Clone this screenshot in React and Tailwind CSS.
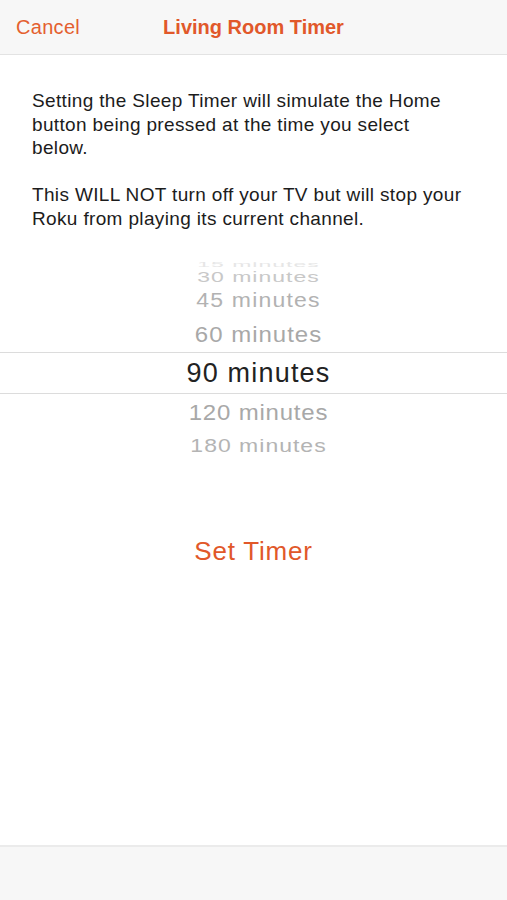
const options = [
  { label: '15 minutes', h: 'h-[12px]', cls: 'text-[23px] tracking-[1px] scale-y-[0.3] text-[#e6e6e6]' },
  { label: '30 minutes', h: 'h-[15px]', cls: 'text-[23px] tracking-[1px] scale-y-[0.6] text-[#c8c8c8]' },
  { label: '45 minutes', h: 'h-[31px]', cls: 'text-[23px] tracking-[1.2px] scale-y-[0.85] text-[#b2b2b2]' },
  { label: '60 minutes', h: 'h-[36px]', cls: 'text-[24px] tracking-[1px] scale-y-[0.95] text-[#a8a8a8]' },
];

const after = [
  { label: '120 minutes', h: 'h-[36px]', cls: 'text-[24px] tracking-[0.8px] scale-y-[0.95] text-[#a8a8a8]' },
  { label: '180 minutes', h: 'h-[30px]', cls: 'text-[23px] tracking-[1px] scale-y-[0.82] text-[#b4b4b4]' },
];

const PickerRow = ({ item }) => (
  <div className={`${item.h} flex items-center justify-center overflow-hidden pl-[10px]`}>
    <span className={`leading-none ${item.cls}`}>{item.label}</span>
  </div>
);

const App = () => {
  return (
    <div className="min-h-[900px] flex flex-col bg-white font-['Liberation_Sans',Arial,sans-serif]">
      {/* nav bar */}
      <div className="h-[55px] bg-[#f7f7f7] border-b border-[#e3e3e3] grid grid-cols-[1fr_auto_1fr] items-center">
        <button className="justify-self-start pl-4 text-[20px] tracking-[0.3px] text-[#e4602f]">Cancel</button>
        <h1 className="text-[20px] font-bold text-[#e1582a]">Living Room Timer</h1>
        <div />
      </div>

      <div className="pl-8 pt-[34px] text-[19px] leading-[23.5px] tracking-[0.35px] text-[#1c1c1c]">
        <div className="w-[436px]">
          <p>Setting the Sleep Timer will simulate the Home button being pressed at the time you select below.</p>
          <p className="mt-[23.5px]">This WILL NOT turn off your TV but will stop your Roku from playing its current channel.</p>
        </div>
      </div>

      {/* picker wheel */}
      <div className="mt-[28px] flex flex-col">
        {options.map(o => <PickerRow key={o.label} item={o} />)}
        <div className="h-[42px] border-y border-[#dcdcdc] flex items-center justify-center pl-[10px]">
          <span className="text-[27px] leading-none tracking-[1.2px] text-[#222]">90 minutes</span>
        </div>
        {after.map(o => <PickerRow key={o.label} item={o} />)}
      </div>

      <div className="mt-[76px] flex justify-center">
        <button className="text-[26px] leading-[30px] tracking-[0.8px] text-[#e1582a]">Set Timer</button>
      </div>

      <div className="flex-1" />
      <div className="h-[55px] bg-[#f7f7f7] border-t-2 border-[#ebebeb]" />
    </div>
  );
};

export default App;
